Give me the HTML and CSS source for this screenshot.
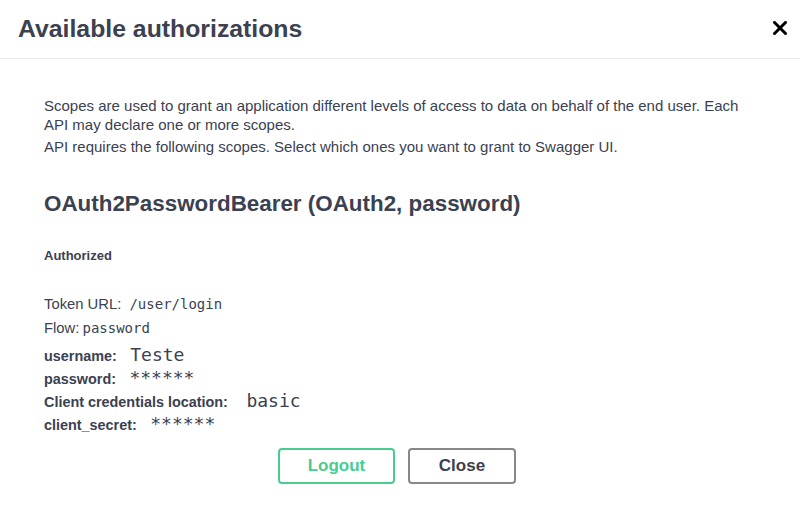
FILE: index.html
```html
<!DOCTYPE html>
<html>
<head>
<meta charset="utf-8">
<link rel="stylesheet" href="styles.css">
</head>
<body>
<div class="modal">
  <header class="modal-header">
    <h3 class="modal-title">Available authorizations</h3>
    <button class="close-btn" aria-label="Close">
      <svg width="14" height="14" viewBox="0 0 14 14"><path d="M1.5 1.5 L12.5 12.5 M12.5 1.5 L1.5 12.5" stroke="#000" stroke-width="3" stroke-linecap="square"/></svg>
    </button>
  </header>
  <div class="modal-content">
    <p class="desc">Scopes are used to grant an application different levels of access to data on behalf of the end user. Each API may declare one or more scopes.</p>
    <p class="desc second">API requires the following scopes. Select which ones you want to grant to Swagger UI.</p>
    <h4 class="scheme-title">OAuth2PasswordBearer (OAuth2, password)</h4>
    <h6 class="status">Authorized</h6>
    <div class="info">
      <div class="info-row">Token URL: <code class="small-code token-url">/user/login</code></div>
      <div class="info-row">Flow: <code class="small-code">password</code></div>
    </div>
    <div class="creds">
      <div class="cred-row"><span class="label">username:</span> <code class="value">Teste</code></div>
      <div class="cred-row"><span class="label">password:</span> <code class="value">******</code></div>
      <div class="cred-row"><span class="label">Client credentials location:</span> <code class="value value-wide">basic</code></div>
      <div class="cred-row"><span class="label">client_secret:</span> <code class="value">******</code></div>
    </div>
    <div class="btn-wrapper">
      <button class="btn btn-logout">Logout</button>
      <button class="btn btn-close">Close</button>
    </div>
  </div>
</div>
</body>
</html>
```

FILE: styles.css
```css
* { box-sizing: border-box; }
html, body {
  margin: 0;
  padding: 0;
  background: #fff;
}
body {
  font-family: "Liberation Sans", Arial, sans-serif;
  color: #3b4151;
  width: 800px;
  height: 518px;
  overflow: hidden;
}
.modal-header {
  display: flex;
  align-items: center;
  justify-content: space-between;
  height: 59px;
  padding: 0 13px 0 18px;
  border-bottom: 1px solid #ebebeb;
}
.modal-title {
  margin: 0;
  font-size: 24.8px;
  font-weight: bold;
  color: #3b4151;
}
.close-btn {
  background: none;
  border: none;
  padding: 0;
  width: 14px;
  height: 14px;
  display: flex;
  margin-bottom: 2px;
}
.modal-content {
  padding: 37px 44px 0 44px;
}
.desc {
  margin: 0;
  font-size: 15px;
  line-height: 19px;
}
.desc.second {
  margin-top: 3px;
}
.scheme-title {
  margin: 34px 0 0;
  font-size: 22.4px;
  line-height: 28px;
  font-weight: bold;
}
.status {
  margin: 29px 0 0;
  font-size: 13px;
  line-height: 18px;
  font-weight: bold;
}
.info {
  margin-top: 27px;
  font-size: 14.8px;
}
.info-row {
  line-height: 24px;
}
.small-code {
  font-family: "DejaVu Sans Mono", monospace;
  font-size: 14px;
  margin-left: -1px;
}
.token-url {
  margin-left: 4px;
}
.creds {
  margin-top: 3px;
}
.cred-row {
  line-height: 23px;
  height: 23px;
}
.label {
  font-size: 14.4px;
  font-weight: bold;
}
.value {
  font-family: "DejaVu Sans Mono", monospace;
  font-size: 18px;
  margin-left: 9px;
}
.value-wide {
  margin-left: 14px;
}
.btn-wrapper {
  display: flex;
  justify-content: center;
  gap: 13px;
  margin-top: 13px;
  padding-right: 6px;
}
.btn {
  height: 36px;
  background: #fff;
  border: 2px solid #888;
  border-radius: 4px;
  font-family: "Liberation Sans", Arial, sans-serif;
  font-size: 17px;
  font-weight: bold;
  color: #3b4151;
  padding: 0;
}
.btn-logout {
  width: 117px;
  border-color: #49cc90;
  color: #49cc90;
}
.btn-close {
  width: 108px;
}
```
